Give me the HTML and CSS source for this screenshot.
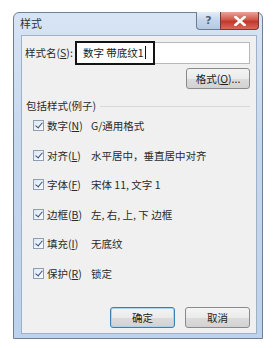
FILE: index.html
```html
<!DOCTYPE html>
<html lang="zh">
<head>
<meta charset="utf-8">
<link rel="stylesheet" href="styles.css">
</head>
<body>
<div class="window">
  <div class="titlebar">
    <span class="title">样式</span>
    <div class="caption">
      <span class="cap-btn help">?</span>
      <span class="cap-btn close">
        <svg width="12" height="10" viewBox="0 0 12 10"><path d="M1.5 1 L10.5 9 M10.5 1 L1.5 9" stroke="#fff" stroke-width="2.6" stroke-linecap="square"/></svg>
      </span>
    </div>
  </div>
  <div class="client">
    <div class="name-row">
      <span class="name-label">样式名(<u>S</u>):</span>
      <div class="name-input">
        <span class="name-focus">数字 带底纹1<span class="caret"></span></span>
      </div>
    </div>
    <div class="format-row">
      <span class="btn format-btn">格式(<u>O</u>)...</span>
    </div>
    <div class="group-label"><span>包括样式(例子)</span><span class="group-line"></span></div>
    <div class="rows">
      <div class="row"><span class="chk"></span><span class="rlabel">数字(<u>N</u>)</span><span class="rdesc">G/通用格式</span></div>
      <div class="row"><span class="chk"></span><span class="rlabel">对齐(<u>L</u>)</span><span class="rdesc">水平居中，垂直居中对齐</span></div>
      <div class="row"><span class="chk"></span><span class="rlabel">字体(<u>F</u>)</span><span class="rdesc">宋体 11, 文字 1</span></div>
      <div class="row"><span class="chk"></span><span class="rlabel">边框(<u>B</u>)</span><span class="rdesc">左, 右, 上, 下 边框</span></div>
      <div class="row"><span class="chk"></span><span class="rlabel">填充(<u>I</u>)</span><span class="rdesc">无底纹</span></div>
      <div class="row"><span class="chk"></span><span class="rlabel">保护(<u>R</u>)</span><span class="rdesc">锁定</span></div>
    </div>
    <div class="footer">
      <span class="btn ok-btn">确定</span>
      <span class="btn">取消</span>
    </div>
  </div>
</div>
</body>
</html>
```
FILE: styles.css
```css
html, body { margin: 0; padding: 0; background: #fff; }
body {
  font-family: "Noto Sans CJK SC", "Noto Sans", sans-serif;
  font-size: 10.5px;
  color: #2a2a2a;
  padding: 12px 0 0 13px;
}
u { text-decoration: underline; text-underline-offset: 1px; }
.window {
  width: 250px;
  height: 327px;
  box-sizing: border-box;
  border: 1px solid #6f7f95;
  border-radius: 6px 6px 0 0;
  background: linear-gradient(#d7e4f4, #c6d8ee 40%, #bdd2ec);
  padding: 0 5px 4px 7px;
  display: flex;
  flex-direction: column;
}
.titlebar {
  height: 22px;
  display: flex;
  align-items: flex-start;
}
.title {
  margin-top: 3px;
  margin-left: -1px;
  line-height: 14px;
  font-size: 11px;
  color: #333;
}
.caption {
  margin-left: auto;
  display: flex;
  margin-top: -1px;
  margin-right: -2px;
}
.cap-btn {
  height: 18px;
  display: flex;
  align-items: center;
  justify-content: center;
  box-sizing: border-box;
  border: 1px solid #6b7c93;
  border-top: none;
}
.help {
  width: 24px;
  border-radius: 0 0 0 4px;
  background: linear-gradient(#e4edf8, #c4d5ea 50%, #b5c9e2);
  color: #52657e;
  font-family: "DejaVu Sans", sans-serif;
  font-weight: bold;
  font-size: 11px;
  border-right: none;
}
.close {
  width: 39px;
  border-radius: 0 0 4px 0;
  background: linear-gradient(#e8a496, #d2584a 45%, #c0392b 55%, #d86a5a);
  border-color: #7a3a33;
}
.client {
  flex: 1;
  background: #f0f0f0;
  border: 1px solid #9fb0c7;
  padding: 5px 6px 0 3px;
  display: flex;
  flex-direction: column;
}
.name-row {
  display: flex;
  align-items: center;
  height: 23px;
}
.name-label {
  flex: none;
  white-space: nowrap;
  width: 50px;
}
.name-input {
  flex: 1;
  height: 22px;
  box-sizing: border-box;
  background: #fff;
  border: 1px solid #b8b8b8;
  display: flex;
}
.name-focus {
  width: 80px;
  height: 24px;
  margin: -2px 0 0 -1px;
  box-sizing: border-box;
  border: 2px solid #141414;
  display: flex;
  align-items: center;
  padding-left: 6px;
  white-space: nowrap;
  color: #222;
}
.caret {
  width: 1px;
  height: 13px;
  background: #111;
  margin-left: 1px;
}
.format-row {
  display: flex;
  justify-content: flex-end;
  margin-top: 4px;
}
.btn {
  width: 65px;
  height: 21px;
  box-sizing: border-box;
  border: 1px solid #8a8a8a;
  border-radius: 3px;
  background: linear-gradient(#f4f4f4, #ebebeb 50%, #dcdcdc 51%, #d2d2d2);
  display: flex;
  align-items: center;
  justify-content: center;
  color: #222;
}
.format-btn { width: 64px; }
.group-label {
  display: flex;
  align-items: center;
  margin-top: 10px;
  height: 14px;
  line-height: 14px;
  padding-left: 1px;
}
.group-line {
  flex: 1;
  height: 1px;
  background: #d8d8d8;
  margin-left: 4px;
  margin-top: 1px;
}
.rows { margin-top: -2px; }
.row {
  height: 29.5px;
  display: flex;
  align-items: center;
  padding-left: 8px;
  white-space: nowrap;
}
.chk {
  width: 11px;
  height: 11px;
  box-sizing: border-box;
  border: 1px solid #8e9fb4;
  background: linear-gradient(135deg, #dde6f0, #fafcff);
  margin-right: 3px;
  position: relative;
}
.chk::after {
  content: "";
  position: absolute;
  left: 3px;
  top: 0px;
  width: 3px;
  height: 6px;
  border: solid #3a4f7a;
  border-width: 0 1.5px 1.5px 0;
  transform: rotate(40deg);
}
.rlabel { width: 44px; }
.rdesc { color: #2a2a2a; }
.footer {
  display: flex;
  justify-content: flex-end;
  gap: 10px;
  margin-top: 19px;
}
.ok-btn {
  border-color: #3c7fb1;
  box-shadow: inset 0 0 0 1px #a6d4f2;
}
```
